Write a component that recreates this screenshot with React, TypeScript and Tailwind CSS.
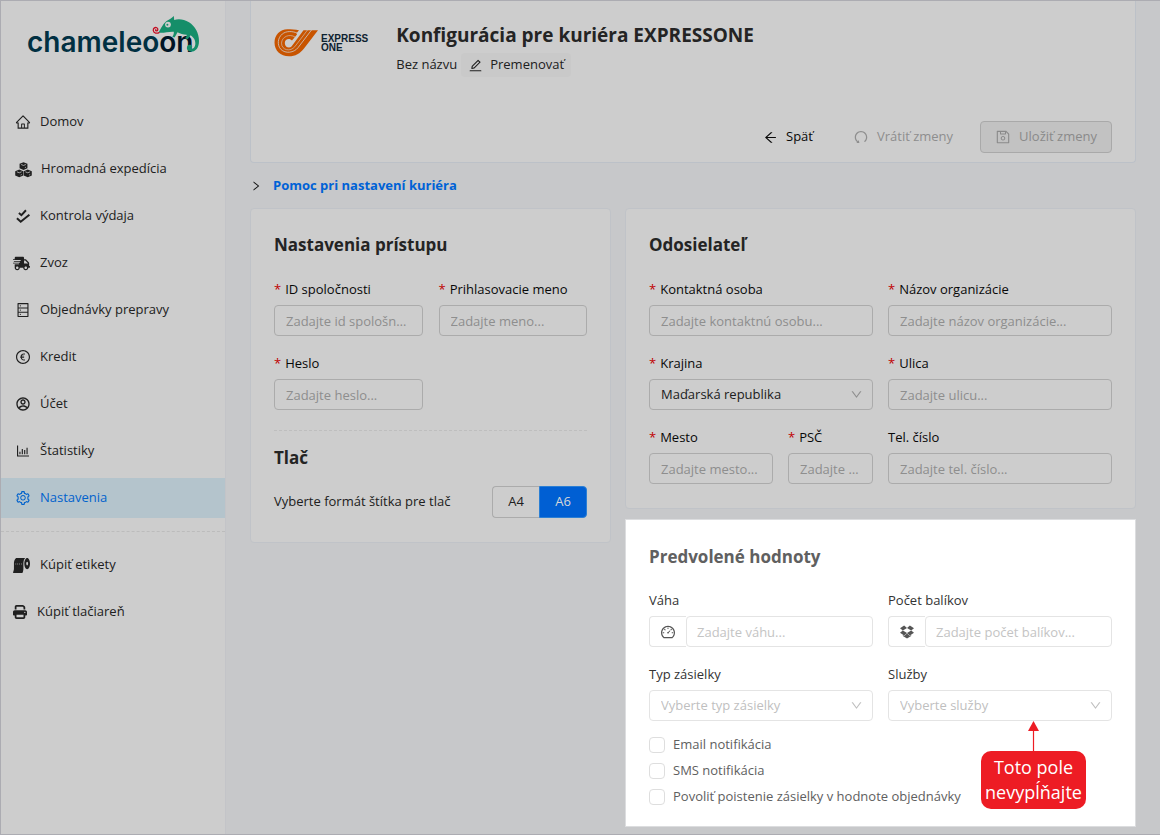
import type { ReactNode } from "react";
import {
  AiOutlineHome,
  AiOutlineDatabase,
  AiOutlineEuroCircle,
  AiOutlineBarChart,
  AiOutlineSetting,
  AiOutlineEdit,
  AiOutlineArrowLeft,
  AiOutlineUndo,
  AiOutlineSave,
  AiOutlineDown,
  AiOutlineRight,
  AiOutlineDashboard,
  AiOutlineDropbox,
} from "react-icons/ai";
import { FaShippingFast, FaToiletPaper } from "react-icons/fa";
import { FaPrint } from "react-icons/fa6";
import { RiAccountCircleLine } from "react-icons/ri";

type IconProps = { size?: number; className?: string };
type Icon = (props: IconProps) => ReactNode;
type NavEntry = { label: string; icon: Icon; size: number; wide?: boolean; active?: boolean };

function CubesIcon({ size, className }: IconProps) {
  return (
    <svg width={size} height={size} viewBox="0 0 16 16" className={className} aria-hidden="true">
      <g fill="currentColor">
        <path d="M8 1.200L11.700 2.700V6.900L8 8.500L4.300 6.900V2.700Z" />
        <path d="M4 8L7.800 9.600V13.700L4 15.300L.2 13.700V9.600Z" />
        <path d="M12 8L15.800 9.600V13.700L12 15.300L8.200 13.700V9.600Z" />
      </g>
      <g stroke="#cdcdcd" strokeWidth=".7" fill="none">
        <path d="M5.800 3.300L8 4.200L10.200 3.300M9.300 6.300L10.300 5.800" />
        <path d="M1.800 10.200L4 11.100L6.200 10.200M5.300 13.200L6.300 12.700" />
        <path d="M9.800 10.200L12 11.100L14.200 10.200M13.300 13.200L14.300 12.700" />
      </g>
    </svg>
  );
}

function DoubleCheckIcon({ size, className }: IconProps) {
  return (
    <svg width={size} height={size} viewBox="0 0 14 14" className={className} aria-hidden="true">
      <path
        d="M3.400 4.400L5.600 6.300L9.600 2M1.700 9L5 12.100L12.600 5.900"
        fill="none"
        stroke="currentColor"
        strokeWidth="1.700"
      />
    </svg>
  );
}

const mainNav: NavEntry[] = [
  { label: "Domov", icon: AiOutlineHome, size: 16 },
  { label: "Hromadná expedícia", icon: CubesIcon, size: 17 },
  { label: "Kontrola výdaja", icon: DoubleCheckIcon, size: 16 },
  { label: "Zvoz", icon: FaShippingFast, size: 17, wide: true },
  { label: "Objednávky prepravy", icon: AiOutlineDatabase, size: 16 },
  { label: "Kredit", icon: AiOutlineEuroCircle, size: 16 },
  { label: "Účet", icon: RiAccountCircleLine, size: 16 },
  { label: "Štatistiky", icon: AiOutlineBarChart, size: 16 },
  { label: "Nastavenia", icon: AiOutlineSetting, size: 16, active: true },
];

const shopNav: NavEntry[] = [
  { label: "Kúpiť etikety", icon: FaToiletPaper, size: 17, wide: true },
  { label: "Kúpiť tlačiareň", icon: FaPrint, size: 14, wide: true },
];

function NavList({ items }: { items: NavEntry[] }) {
  return (
    <ul className="flex flex-col gap-[7px]">
      {items.map(({ label, icon: Glyph, size, wide, active }) => (
        <li key={label}>
          <a
            href="#"
            className={`flex h-10 items-center ${wide ? "gap-2.5 pl-3" : "gap-[9px] pl-3.5"} ${
              active ? "bg-[#b4c4cc] text-[#0062cc]" : "text-[#202020]"
            }`}
          >
            <Glyph size={size} className="shrink-0" />
            <span>{label}</span>
          </a>
        </li>
      ))}
    </ul>
  );
}

function ChameleoonLogo() {
  return (
    <div className="relative ml-[26px] mt-5 h-10 w-44 text-[28px] font-semibold leading-10 text-[#003042]">
      <span className="font-['Inter',sans-serif]">
        chameleo<span className="text-[#001425]">on</span>
      </span>
      <svg viewBox="150 14 50 40" className="absolute -top-[7px] right-[3px] h-10 w-[50px]" aria-hidden="true">
        <path
          d="M158.5 32.6C161 28.500 163.500 23 167 20.800C169.500 19.300 171.500 18.200 173.800 16L174.200 20C178 18.600 184 19 189 22.200C195 26 199 33 199 41C199 48 195.500 51.600 191.500 51.600C187.500 51.600 186 48.600 187.400 46C188.400 44.200 191 44.200 192 46C192.600 47.300 191.600 48.300 190.600 47.800C191.400 49.600 194.800 48.600 195.300 44.500C195.800 40.500 193.600 37 190.500 35.200C189.600 37.200 188.600 38 187.500 39.200L185 38.200C186.400 37 186.800 36 186.600 34.800C183 34.600 180.500 33.600 177.500 32.200C176.500 33.600 176 35.500 174.500 37.400L172.300 36.800C173.600 35 174 33.500 173.800 31.800C169 31.400 163 33.400 158.500 32.600Z"
          fill="#158e69"
        />
        <circle cx="168" cy="24.600" r="2.900" fill="#cdcdcd" />
        <circle cx="167.400" cy="24.800" r="1" fill="#158e69" />
        <path
          d="M159 32.600C157 33.800 153.600 33.200 153.300 30.500C153.100 28 155.300 27 156.800 27.800C158.600 28.800 157.800 31 156.300 30.800C155.500 30.700 155.400 30 155.800 29.600"
          fill="none"
          stroke="#c40d22"
          strokeWidth="1.300"
          strokeLinecap="round"
        />
      </svg>
    </div>
  );
}

function ExpressOneLogo() {
  return (
    <div className="flex items-start gap-[3px]">
      <svg viewBox="274 28 44 30" className="h-[30px] w-11" aria-hidden="true">
        <path
          d="M296.500 33.200L299 30.300C295.500 29.600 291 29.300 287.500 29.300C280 29.300 274.500 35 274.500 42.500C274.500 50.500 280.500 56.300 289 56.300C295.500 56.300 300 53.500 304 48.500L318 30.300H303.500L291.500 46.500C289.500 48.500 284.800 47.500 284.800 43C284.800 39 289.500 37.500 292 40.500L297 34.500Z"
          fill="#c85400"
        />
        <path
          d="M297.500 33.200C292 30.800 286 31 282.300 34C277.500 38 277 45 280.800 49.300C285.500 54 294 52.800 298 47.700L311.500 30"
          fill="none"
          stroke="#cdcdcd"
          strokeWidth=".8"
        />
        <path
          d="M295 37C289.500 33.500 281.800 36.500 281.500 43.200C281.700 50.500 290.500 52 294.800 46.700L307.500 30"
          fill="none"
          stroke="#cdcdcd"
          strokeWidth=".6"
        />
      </svg>
      <p className="mt-1.5 font-['Liberation_Sans',sans-serif] text-[10px] font-bold leading-[9px] text-[#0d2230]">
        EXPRESS
        <br />
        ONE
      </p>
    </div>
  );
}

const line = "border-[#ababab]";
const softLine = "border-[#e4e4e4]";

function Label({ id, required, children }: { id: string; required?: boolean; children: ReactNode }) {
  return (
    <label htmlFor={id} className="mb-1 flex h-[22px] items-center gap-1 whitespace-nowrap">
      {required && <span className="text-[#c00000]">*</span>}
      {children}
    </label>
  );
}

function TextField(props: {
  id: string;
  label: string;
  placeholder: string;
  required?: boolean;
  type?: string;
}) {
  return (
    <div className="min-w-0">
      <Label id={props.id} required={props.required}>
        {props.label}
      </Label>
      <input
        id={props.id}
        type={props.type ?? "text"}
        placeholder={props.placeholder}
        className={`block h-[31px] w-full text-ellipsis rounded border bg-transparent px-[11px] placeholder:text-[#8e8e8e] ${line}`}
      />
    </div>
  );
}

function AddonField(props: { id: string; label: string; placeholder: string; icon: Icon }) {
  const Glyph = props.icon;
  return (
    <div className="min-w-0">
      <Label id={props.id}>{props.label}</Label>
      <div className="flex h-[31px]">
        <span
          className={`flex w-[37px] shrink-0 items-center justify-center rounded-l border border-r-0 text-[#555] ${softLine}`}
        >
          <Glyph size={16} />
        </span>
        <input
          id={props.id}
          type="text"
          placeholder={props.placeholder}
          className={`h-full w-full min-w-0 rounded border bg-transparent px-2.5 placeholder:text-[#c4c4c4] ${softLine}`}
        />
      </div>
    </div>
  );
}

function SelectField(props: { id: string; label: string; value: string; required?: boolean; soft?: boolean }) {
  return (
    <div className="min-w-0">
      <Label id={props.id} required={props.required}>
        {props.label}
      </Label>
      <div className="relative">
        <select
          id={props.id}
          className={`block h-[31px] w-full appearance-none rounded border bg-transparent px-[11px] ${
            props.soft ? `text-[#bfbfbf] ${softLine}` : `text-[#202020] ${line}`
          }`}
        >
          <option>{props.value}</option>
        </select>
        <AiOutlineDown
          size={13}
          className={`pointer-events-none absolute right-2.5 top-[9px] ${
            props.soft ? "text-[#bfbfbf]" : "text-[#8e8e8e]"
          }`}
        />
      </div>
    </div>
  );
}

function Card({ title, children, lit }: { title: string; children: ReactNode; lit?: boolean }) {
  return (
    <section
      className={`px-[23px] ${
        lit
          ? "border border-[#dcdddf] bg-white pb-4 pt-[23px] text-[#333]"
          : "rounded border border-[#c0c3c8] bg-[#cdcdcd] pb-6 pt-[22px] text-[#080808]"
      }`}
    >
      <h2
        className={`text-[17px] font-bold leading-7 ${
          lit ? "mb-[19px] text-[#606060]" : "mb-5 text-[#242424]"
        }`}
      >
        {title}
      </h2>
      {children}
    </section>
  );
}

function Callout() {
  return (
    <div className="absolute right-[26px] top-full flex flex-col items-center text-[18px] leading-[25px] text-white">
      <svg viewBox="0 0 12 30" className="h-[30px] w-3" aria-hidden="true">
        <path d="M5.500 0L11 10H0Z" fill="#ed1c24" />
        <path d="M5.500 8V30" stroke="#ed1c24" strokeWidth="1.200" />
      </svg>
      <p className="w-[105px] rounded-[10px] bg-[#ed1c24] py-1 text-center">
        Toto pole
        <br />
        nevypĺňajte
      </p>
    </div>
  );
}

const options = ["Email notifikácia", "SMS notifikácia", "Povoliť poistenie zásielky v hodnote objednávky"];

export default function App() {
  return (
    <div className="flex min-h-screen border-y border-l border-[#acacb2] bg-[#c7c8ca] font-['Open_Sans',sans-serif] text-[13px] text-[#202020]">
      <aside className="w-[225px] shrink-0 border-r border-[#c3c4c8] bg-[#cdcdcd]">
        <div className="flow-root h-[101px]">
          <ChameleoonLogo />
        </div>
        <nav>
          <NavList items={mainNav} />
          <hr className="my-[13px] border-dashed border-[#bcbcbc]" />
          <NavList items={shopNav} />
        </nav>
      </aside>

      <main className="min-w-0 flex-1 px-6">
        <header className="rounded-b border border-t-0 border-[#bcc1c8] bg-[#cdcdcd] px-[23px] pb-[9px] pt-5">
          <div className="flex h-[100px] gap-7">
            <div className="pt-[7px]">
              <ExpressOneLogo />
            </div>
            <div>
              <h1 className="text-[19px] font-bold leading-7 text-[#242424]">
                Konfigurácia pre kuriéra EXPRESSONE
              </h1>
              <div className="mt-1 flex items-center gap-1">
                <span>Bez názvu</span>
                <button type="button" className="flex h-6 items-center gap-[7px] rounded bg-[#c9c9c9] px-[7px]">
                  <AiOutlineEdit size={15} />
                  Premenovať
                </button>
              </div>
            </div>
          </div>
          <div className="flex items-center justify-end gap-3">
            <div className="flex gap-2.5">
              <button type="button" className="flex h-8 items-center gap-2 px-[15px] text-[#080808]">
                <AiOutlineArrowLeft size={15} />
                Späť
              </button>
              <button type="button" disabled className="flex h-8 items-center gap-2 px-[15px] text-[#8e8e8e]">
                <AiOutlineUndo size={16} />
                Vrátiť zmeny
              </button>
            </div>
            <button
              type="button"
              disabled
              className="flex h-8 items-center gap-2 rounded border border-[#a9a9a9] bg-[#c2c2c2] px-3.5 text-[#8a8a8a]"
            >
              <AiOutlineSave size={16} />
              Uložiť zmeny
            </button>
          </div>
        </header>

        <button type="button" className="flex h-[45px] items-center gap-[11px] font-bold text-[#0062d6]">
          <AiOutlineRight size={12} className="text-[#101010]" />
          Pomoc pri nastavení kuriéra
        </button>

        <div className="grid grid-cols-[minmax(0,361fr)_minmax(0,511fr)] items-start gap-3.5">
          <Card title="Nastavenia prístupu">
            <div className="grid grid-cols-2 gap-x-4 gap-y-[17px]">
              <TextField id="company-id" label="ID spoločnosti" placeholder="Zadajte id spološnosti..." required />
              <TextField id="login" label="Prihlasovacie meno" placeholder="Zadajte meno..." required />
              <TextField id="password" label="Heslo" placeholder="Zadajte heslo..." type="password" required />
            </div>
            <hr className="mb-[13px] mt-5 border-dashed border-[#bebebe]" />
            <h2 className="text-[17px] font-bold leading-7 text-[#242424]">Tlač</h2>
            <div className="mt-[14px] flex items-center justify-between text-[#202020]">
              <span>Vyberte formát štítka pre tlač</span>
              <div className="flex h-8">
                <button type="button" className={`w-[47px] rounded-l border border-r-0 ${line}`}>
                  A4
                </button>
                <button
                  type="button"
                  className="w-12 rounded-r border border-[#2b7fd4] bg-[#005fd3] text-[#d8d8d8]"
                >
                  A6
                </button>
              </div>
            </div>
          </Card>

          <div className="flex flex-col gap-2.5">
            <Card title="Odosielateľ">
              <div className="grid grid-cols-2 gap-x-[15px] gap-y-[17px]">
                <TextField id="contact" label="Kontaktná osoba" placeholder="Zadajte kontaktnú osobu..." required />
                <TextField id="org" label="Názov organizácie" placeholder="Zadajte názov organizácie..." required />
                <SelectField id="country" label="Krajina" value="Maďarská republika" required />
                <TextField id="street" label="Ulica" placeholder="Zadajte ulicu..." required />
                <div className="grid grid-cols-[minmax(0,124fr)_minmax(0,85fr)] gap-[15px]">
                  <TextField id="city" label="Mesto" placeholder="Zadajte mesto..." required />
                  <TextField id="zip" label="PSČ" placeholder="Zadajte psč..." required />
                </div>
                <TextField id="phone" label="Tel. číslo" placeholder="Zadajte tel. číslo..." />
              </div>
            </Card>

            <Card title="Predvolené hodnoty" lit>
              <div className="grid grid-cols-2 gap-x-[15px] gap-y-[17px]">
                <AddonField id="weight" label="Váha" placeholder="Zadajte váhu..." icon={AiOutlineDashboard} />
                <AddonField
                  id="count"
                  label="Počet balíkov"
                  placeholder="Zadajte počet balíkov..."
                  icon={AiOutlineDropbox}
                />
                <SelectField id="type" label="Typ zásielky" value="Vyberte typ zásielky" soft />
                <div className="relative">
                  <SelectField id="services" label="Služby" value="Vyberte služby" soft />
                  <Callout />
                </div>
              </div>
              <div className="mt-[11px] flex flex-col items-start text-[#606060]">
                {options.map((text) => (
                  <label key={text} className="flex h-[26px] items-center gap-2">
                    <input
                      type="checkbox"
                      className="h-4 w-4 appearance-none rounded border border-[#dedede] bg-white checked:bg-[#0062d6]"
                    />
                    {text}
                  </label>
                ))}
              </div>
            </Card>
          </div>
        </div>
      </main>
    </div>
  );
}
